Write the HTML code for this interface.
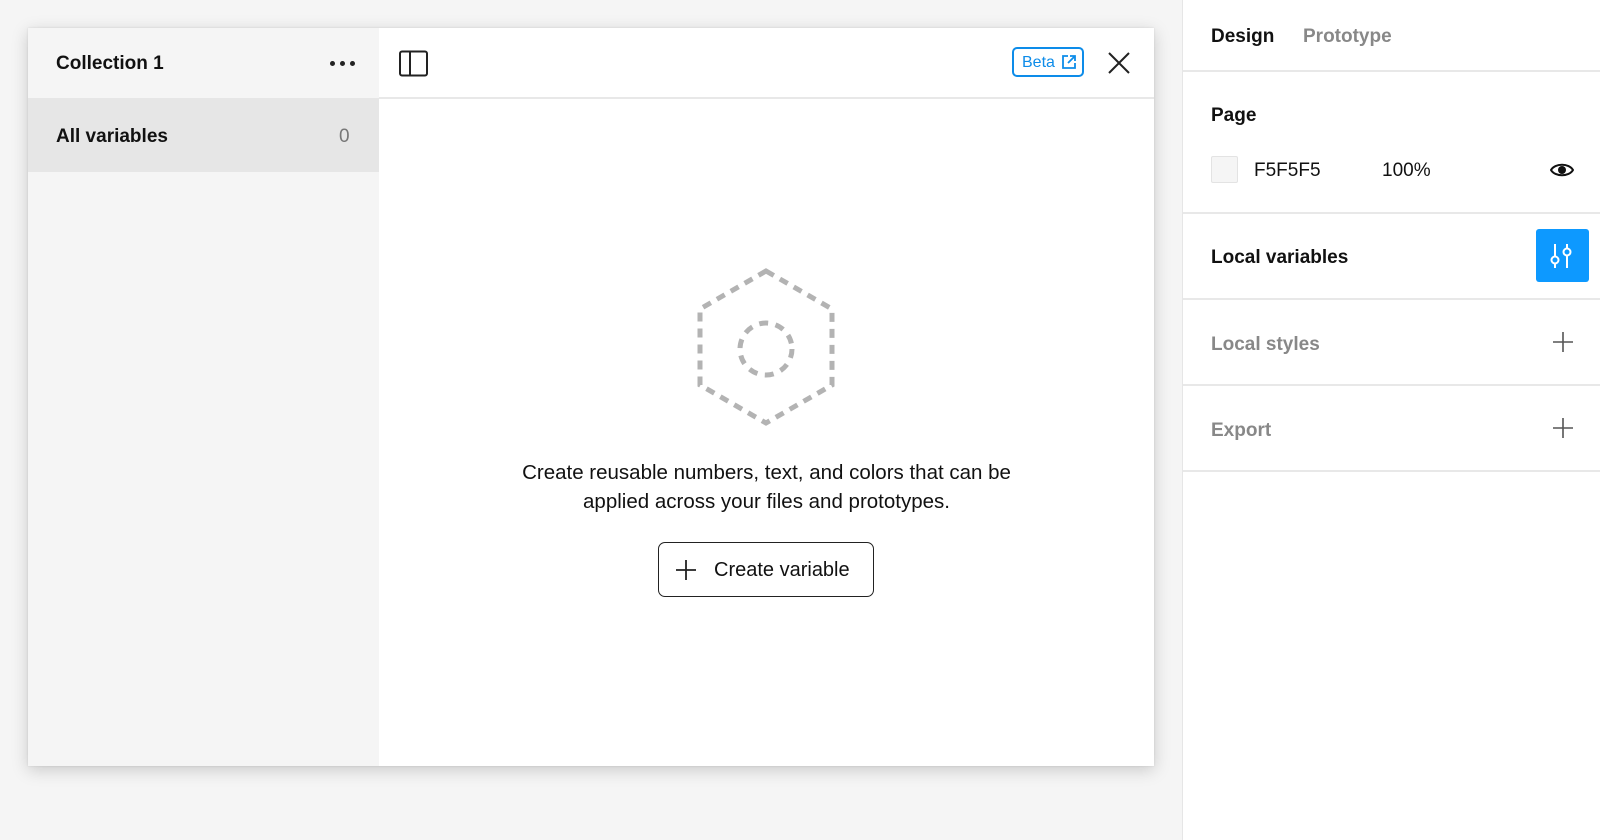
<!DOCTYPE html>
<html><head><style>
body{margin:0;width:1600px;height:840px;background:#f5f5f5;font-family:"Liberation Sans",Arial,sans-serif;position:relative;overflow:hidden;color:#111}
.a{position:absolute}
.modal{left:28px;top:28px;width:1126px;height:738px;background:#fff;box-shadow:0 4px 16px rgba(0,0,0,.18),0 0 2px rgba(0,0,0,.1)}
.side{left:0;top:0;width:351px;height:738px;background:#f5f5f5}
.right{left:1182px;top:0;width:418px;height:840px;background:#fff;border-left:1px solid #e6e6e6}
.hr{position:absolute;left:0;right:0;height:2px;background:#e8e8e8}
.b{font-weight:bold}
</style></head><body>
<div class="a modal">
 <div class="a side">
  <div class="a b" style="left:28px;top:25px;font-size:19px">Collection 1</div>
  <div class="a" style="left:302px;top:33px;display:flex;gap:5px"><i style="width:5px;height:5px;border-radius:50%;background:#222"></i><i style="width:5px;height:5px;border-radius:50%;background:#222"></i><i style="width:5px;height:5px;border-radius:50%;background:#222"></i></div>
  <div class="a" style="left:0;top:70px;width:351px;height:74px;background:#e6e6e6"></div>
  <div class="a b" style="left:28px;top:98px;font-size:19px">All variables</div>
  <div class="a" style="left:311px;top:98px;font-size:19px;color:#777">0</div>
 </div>
 <div class="a" style="left:351px;top:69px;width:775px;height:2px;background:#e8e8e8"></div>
 <svg class="a" style="left:371px;top:22px" width="30" height="28"><rect x="1" y="1.5" width="27" height="24" rx="2" fill="none" stroke="#222" stroke-width="2"/><line x1="11" y1="2" x2="11" y2="25" stroke="#222" stroke-width="2"/></svg>
 <div class="a" style="left:984px;top:19px;width:72px;height:30px;border:2px solid #0d8ce9;border-radius:5px;box-sizing:border-box;color:#0d8ce9;font-size:16px;line-height:27px;padding-left:8px">Beta
  <svg style="position:absolute;left:48px;top:6px" width="14" height="14"><path d="M6 1H1v12h12V8M8 1h5v5M13 1L6 8" fill="none" stroke="#0d8ce9" stroke-width="1.8"/></svg></div>
 <svg class="a" style="left:1080px;top:24px" width="22" height="22"><path d="M1 1L21 21M21 1L1 21" stroke="#222" stroke-width="2"/></svg>
 <svg class="a" style="left:666px;top:238px" width="144" height="164"><polygon points="72,5 138,43 138,119 72,157 6,119 6,43" fill="none" stroke="#b3b3b3" stroke-width="5" stroke-dasharray="9,7"/><circle cx="72" cy="83" r="26" fill="none" stroke="#b3b3b3" stroke-width="5" stroke-dasharray="9,7.5"/></svg>
 <div class="a" style="left:351px;top:430px;width:775px;text-align:center;font-size:20.5px;line-height:29px">Create reusable numbers, text, and colors that can be<br>applied across your files and prototypes.</div>
 <div class="a" style="left:630px;top:514px;width:216px;height:55px;border:1.5px solid #222;border-radius:7px;box-sizing:border-box;font-size:20px;line-height:54px;padding-left:55px">Create variable
  <svg style="position:absolute;left:16px;top:16px" width="22" height="22"><path d="M11 1V21M1 11H21" stroke="#222" stroke-width="1.8"/></svg></div>
</div>
<div class="a right">
 <div class="a b" style="left:28px;top:26px;font-size:19px">Design</div>
 <div class="a b" style="left:120px;top:26px;font-size:19px;color:#888">Prototype</div>
 <div class="hr" style="top:70px"></div>
 <div class="a b" style="left:28px;top:105px;font-size:19px">Page</div>
 <div class="a" style="left:28px;top:156px;width:27px;height:27px;background:#f5f5f5;border:1px solid #e3e3e3;border-radius:2px;box-sizing:border-box"></div>
 <div class="a" style="left:71px;top:160px;font-size:19px">F5F5F5</div>
 <div class="a" style="left:199px;top:160px;font-size:19px">100%</div>
 <svg class="a" style="left:367px;top:160px" width="24" height="20"><path d="M1 10C5 3 19 3 23 10C19 17 5 17 1 10Z" fill="none" stroke="#111" stroke-width="2"/><circle cx="12" cy="10" r="4" fill="#111"/></svg>
 <div class="hr" style="top:212px"></div>
 <div class="a b" style="left:28px;top:247px;font-size:19px">Local variables</div>
 <div class="a" style="left:353px;top:229px;width:53px;height:53px;background:#0d99ff;border-radius:3px"></div>
 <svg class="a" style="left:366px;top:242px" width="26" height="28"><path d="M6 2V14M6 22V26M18 2V6M18 14V26" stroke="#fff" stroke-width="2"/><circle cx="6" cy="18" r="3.5" fill="none" stroke="#fff" stroke-width="2"/><circle cx="18" cy="10" r="3.5" fill="none" stroke="#fff" stroke-width="2"/></svg>
 <div class="hr" style="top:298px"></div>
 <div class="a b" style="left:28px;top:334px;font-size:19px;color:#888">Local styles</div>
 <svg class="a" style="left:370px;top:332px" width="20" height="20"><path d="M10 0V20M0 10H20" stroke="#555" stroke-width="1.6"/></svg>
 <div class="hr" style="top:384px"></div>
 <div class="a b" style="left:28px;top:420px;font-size:19px;color:#888">Export</div>
 <svg class="a" style="left:370px;top:418px" width="20" height="20"><path d="M10 0V20M0 10H20" stroke="#555" stroke-width="1.6"/></svg>
 <div class="hr" style="top:470px"></div>
</div>
</body></html>
